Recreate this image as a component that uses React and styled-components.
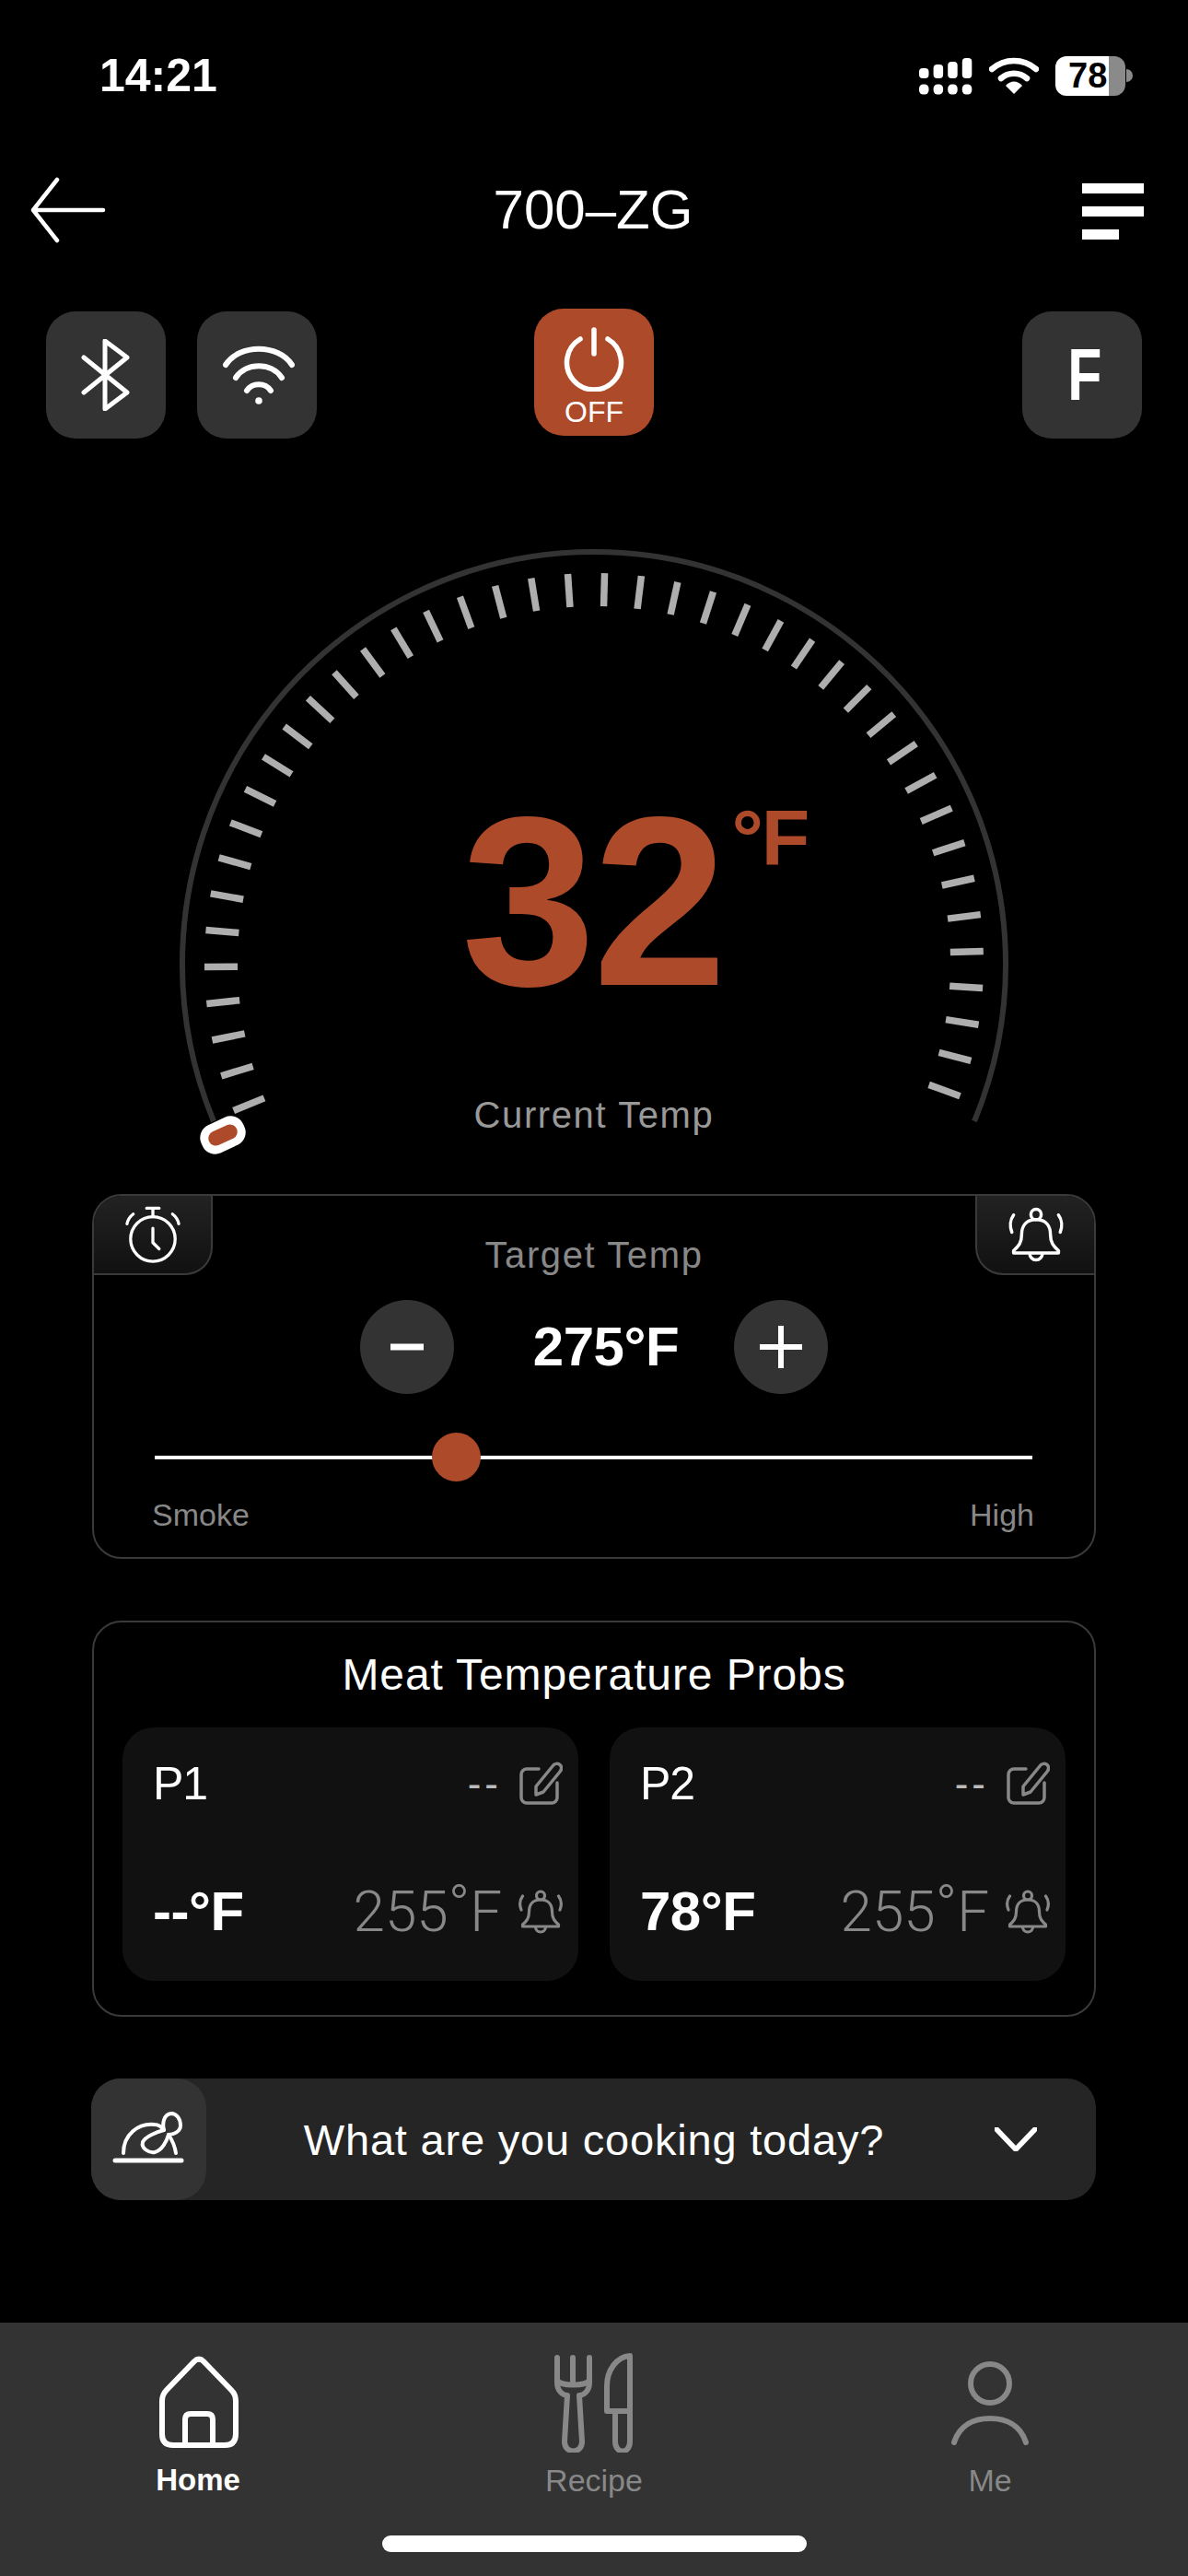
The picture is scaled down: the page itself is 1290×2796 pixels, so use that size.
import React from "react";
import styled, { createGlobalStyle } from "styled-components";

const ORANGE = "#ad4a29";
const FONT = `"Liberation Sans", Arial, sans-serif`;

const GlobalStyle = createGlobalStyle`
  html, body { margin: 0; padding: 0; background: #000; }
  * { box-sizing: border-box; }
`;

const Page = styled.div`
  width: 1290px;
  height: 2796px;
  background: #000;
  color: #fff;
  font-family: ${FONT};
  display: flex;
  flex-direction: column;
  overflow: hidden;
`;

/* STATUS BAR */

const StatusBar = styled.div`
  height: 164px;
  flex: none;
  display: flex;
  align-items: center;
  justify-content: space-between;
  padding: 0 60px 0 108px;
`;

const Clock = styled.div`
  font-size: 50px;
  font-weight: 700;
  line-height: 1;
`;

const StatusIcons = styled.div`
  display: flex;
  align-items: center;
  gap: 18px;
`;

const Battery = styled.div`
  position: relative;
  width: 76px;
  height: 43px;
  border-radius: 12px;
  overflow: hidden;
  background: linear-gradient(to right, #fff 76%, #8a8a8a 76%);
  color: #000;
  font-size: 38px;
  font-weight: 700;
  line-height: 43px;
  padding-left: 14px;
`;

const BatteryNub = styled.div`
  width: 7px;
  height: 14px;
  margin-left: -17px;
  border-radius: 0 7px 7px 0;
  background: #8a8a8a;
`;

/* HEADER */

const Header = styled.div`
  height: 128px;
  flex: none;
  display: flex;
  align-items: center;
  justify-content: space-between;
  padding: 0 48px 0 31px;
`;

const Title = styled.div`
  font-size: 60px;
  line-height: 1;
  padding-right: 2px;
`;

const MenuBars = styled.div`
  width: 67px;
  display: flex;
  flex-direction: column;
  gap: 14px;
  padding-top: 2px;
`;

const MenuBar = styled.div`
  height: 11px;
  background: #fff;
  width: ${({ $short }) => ($short ? "40px" : "67px")};
`;

/* CONTROLS */

const Controls = styled.div`
  margin-top: 43px;
  padding: 0 50px;
  display: grid;
  grid-template-columns: 1fr auto 1fr;
  align-items: start;
  flex: none;
`;

const ControlGroup = styled.div`
  display: flex;
  gap: 34px;
  justify-content: ${({ $end }) => ($end ? "flex-end" : "flex-start")};
`;

const SquareButton = styled.div`
  width: 130px;
  height: 138px;
  margin-top: 3px;
  background: #333;
  border-radius: 32px;
  display: flex;
  align-items: center;
  justify-content: center;
`;

const PowerButton = styled.div`
  width: 130px;
  height: 138px;
  background: ${ORANGE};
  border-radius: 32px;
  display: flex;
  flex-direction: column;
  align-items: center;
  padding-top: 20px;
`;

const PowerLabel = styled.div`
  font-size: 32px;
  line-height: 32px;
  margin-top: 6px;
  letter-spacing: 0;
`;

const UnitLetter = styled.div`
  font-size: 80px;
  font-weight: 700;
  line-height: 1;
  padding-left: 6px;
  transform: scaleX(0.76);
`;

/* GAUGE */

const GaugeWrap = styled.div`
  position: relative;
  height: 820px;
  flex: none;
`;

const GaugeSvg = styled.svg`
  display: block;
`;

const Reading = styled.div`
  position: absolute;
  top: 372px;
  left: 501px;
  display: flex;
  align-items: flex-start;
  color: ${ORANGE};
  font-weight: 700;
`;

const ReadingValue = styled.div`
  font-size: 262px;
  line-height: 262px;
  letter-spacing: -3px;
`;

const ReadingUnit = styled.div`
  font-size: 86px;
  line-height: 86px;
  margin: 18px 0 0 8px;
  letter-spacing: -2px;
`;

const GaugeLabel = styled.div`
  position: absolute;
  left: 0;
  right: 0;
  top: 712px;
  text-align: center;
  font-size: 40px;
  line-height: 44px;
  color: #999;
  letter-spacing: 1.6px;
`;

/* CARDS */

const Card = styled.div`
  flex: none;
  margin: ${({ $top }) => $top}px 100px 0;
  height: ${({ $height }) => $height}px;
  border: 2px solid #3a3a3a;
  border-radius: 32px;
  position: relative;
`;

const CornerTab = styled.div`
  position: absolute;
  top: 0;
  ${({ $right }) => ($right ? "right: 0;" : "left: 0;")}
  width: 129px;
  height: 86px;
  background: linear-gradient(to bottom, #222, #111);
  border-bottom: 2px solid #3a3a3a;
  ${({ $right }) =>
    $right
      ? "border-left: 2px solid #3a3a3a; border-radius: 0 30px 0 30px;"
      : "border-right: 2px solid #3a3a3a; border-radius: 30px 0 30px 0;"}
  display: flex;
  align-items: center;
  justify-content: center;
`;

const TargetLabel = styled.div`
  padding-top: 42px;
  text-align: center;
  font-size: 40px;
  line-height: 44px;
  color: #888;
  letter-spacing: 1.6px;
`;

const Stepper = styled.div`
  margin-top: 27px;
  display: flex;
  justify-content: center;
  align-items: center;
`;

const RoundButton = styled.div`
  width: 102px;
  height: 102px;
  border-radius: 50%;
  background: #333;
  display: flex;
  align-items: center;
  justify-content: center;
`;

const StepValue = styled.div`
  width: 304px;
  text-align: center;
  padding-left: 26px;
  font-size: 60px;
  font-weight: 700;
  line-height: 1;
  letter-spacing: -0.5px;
`;

const SliderTrack = styled.div`
  position: relative;
  margin: 67px 67px 0 66px;
  height: 4px;
  background: #fff;
`;

const SliderThumb = styled.div`
  position: absolute;
  top: -25px;
  width: 53px;
  height: 53px;
  border-radius: 50%;
  background: ${ORANGE};
`;

const SliderLabels = styled.div`
  display: flex;
  justify-content: space-between;
  margin-top: 40px;
  padding: 0 65px 0 63px;
  font-size: 34px;
  line-height: 40px;
  color: #888;
`;

const ProbesTitle = styled.div`
  padding-top: 30px;
  text-align: center;
  font-size: 48px;
  line-height: 54px;
  letter-spacing: 0.9px;
`;

const ProbeGrid = styled.div`
  margin: 30px 31px 0;
  display: grid;
  grid-template-columns: 1fr 1fr;
  gap: 34px;
`;

const ProbeCard = styled.div`
  height: 275px;
  background: #111;
  border-radius: 34px;
  padding: 36px 17px 44px 33px;
  display: flex;
  flex-direction: column;
  justify-content: space-between;
`;

const ProbeRow = styled.div`
  display: flex;
  align-items: center;
  justify-content: space-between;
`;

const ProbeSide = styled.div`
  display: flex;
  align-items: center;
  gap: 18px;
`;

const ProbeName = styled.div`
  font-size: 50px;
  line-height: 1;
  letter-spacing: -1px;
`;

const ProbeDash = styled.div`
  font-size: 44px;
  line-height: 1;
  color: #bbb;
  letter-spacing: 4px;
`;

const ProbeTemp = styled.div`
  font-size: 60px;
  font-weight: 700;
  line-height: 1;
  letter-spacing: -0.5px;
`;

const ProbeTarget = styled.div`
  font-family: Roboto, ${FONT};
  font-weight: 300;
  font-size: 62px;
  line-height: 1;
  color: #888;
`;

const ProbeDegree = styled.span`
  position: relative;
  top: -7px;
`;

const CookSelect = styled.div`
  flex: none;
  margin: 67px 100px 0 99px;
  height: 132px;
  border-radius: 32px;
  background: #252525;
  display: flex;
  align-items: center;
`;

const CookIcon = styled.div`
  width: 125px;
  height: 132px;
  border-radius: 32px;
  background: #333;
  display: flex;
  align-items: center;
  justify-content: center;
`;

const CookText = styled.div`
  flex: 1;
  padding-right: 14px;
  text-align: center;
  font-size: 47px;
  letter-spacing: 0.8px;
`;

const Chevron = styled.svg`
  margin-right: 64px;
  flex: none;
`;

/* TAB BAR */

const TabBar = styled.div`
  margin-top: auto;
  height: 275px;
  flex: none;
  background: #333;
  display: flex;
  flex-direction: column;
  align-items: center;
`;

const Tabs = styled.div`
  width: 100%;
  padding-top: 33px;
  display: grid;
  grid-template-columns: repeat(3, 1fr);
`;

const Tab = styled.div`
  display: flex;
  flex-direction: column;
  align-items: center;
  color: ${({ $active }) => ($active ? "#fff" : "#888")};
`;

const TabIcon = styled.svg`
  display: block;
`;

const TabLabel = styled.div`
  margin-top: 10px;
  font-size: ${({ $active }) => ($active ? "33px" : "34px")};
  font-weight: ${({ $active }) => ($active ? 700 : 400)};
  line-height: 40px;
`;

const HomeIndicator = styled.div`
  margin-top: 40px;
  width: 461px;
  height: 18px;
  border-radius: 9px;
  background: #fff;
`;

/* ICONS */

const line = { fill: "none", stroke: "currentColor", strokeLinecap: "round", strokeLinejoin: "round" };

const SignalIcon = () => (
  <svg width="58" height="42" viewBox="0 0 58 42" fill="#fff">
    {[11, 15, 18, 22].map((h, i) => (
      <g key={i}>
        <rect x={i * 15.6} y={24 - h} width="10.5" height={h} rx="4" />
        <rect x={i * 15.6} y="30.5" width="10.5" height="11" rx="4.5" />
      </g>
    ))}
  </svg>
);

const StatusWifi = () => (
  <svg width="54" height="40" viewBox="0 0 54 40">
    <path d="M3 13 C17 1 37 1 51 13" fill="none" stroke="#fff" strokeWidth="6.5" strokeLinecap="round" />
    <path d="M13 23 C21 16 33 16 41 23" fill="none" stroke="#fff" strokeWidth="6.5" strokeLinecap="round" />
    <path d="M18 31 C23 25 31 25 36 31 L27 40 Z" fill="#fff" />
  </svg>
);

const BackArrow = () => (
  <svg width="84" height="72" viewBox="0 0 84 72" style={{ color: "#fff" }}>
    <path d="M31 3 L5 36 L31 69 M5 36 H81" {...line} strokeWidth="4.5" />
  </svg>
);

const BluetoothIcon = () => (
  <svg width="54" height="78" viewBox="0 0 54 78">
    <path d="M3 20 L50 58 L26 76 V2 L50 20 L3 58" {...line} strokeWidth="5" stroke="#fff" />
  </svg>
);

const WifiIcon = () => (
  <svg width="78" height="66" viewBox="0 0 78 66" style={{ marginLeft: 4 }}>
    <g {...line} stroke="#fff" strokeWidth="6">
      <path d="M3 22 C18 -1 60 -1 75 22" />
      <path d="M14 36 C25 19 53 19 64 36" />
      <path d="M26 50 C32 41 46 41 52 50" />
    </g>
    <circle cx="39" cy="61" r="3.8" fill="#fff" />
  </svg>
);

const PowerIcon = () => (
  <svg width="68" height="70" viewBox="0 0 68 70">
    <g {...line} stroke="#fff" strokeWidth="5.5">
      <path d="M19 13 A29.5 29.5 0 1 0 49 13" />
      <path d="M34 3 V29" />
    </g>
  </svg>
);

const AlarmIcon = () => (
  <svg width="62" height="62" viewBox="0 0 64 64" style={{ color: "#fff" }}>
    <g {...line} strokeWidth="3.4">
      <circle cx="32" cy="37" r="25" />
      <path d="M32 12 V3 M25 2.5 H39" />
      <path d="M32 25 V41 L39 48" />
      <path d="M3 20 C4 15 6 12 10 9" />
      <path d="M61 20 C60 15 58 12 54 9" />
    </g>
  </svg>
);

const BellIcon = ({ size, color, width }) => (
  <svg width={size} height={size} viewBox="0 0 48 48" style={{ color }}>
    <g {...line} strokeWidth={width}>
      <circle cx="24" cy="6.5" r="4.5" />
      <path d="M24 11 C15 11 11.5 17 11.5 24 C11.5 31 9 34 4.5 38 V40 H43.5 V38 C39 34 36.5 31 36.5 24 C36.5 17 33 11 24 11 Z" />
      <path d="M18.5 40.5 A5.5 5.5 0 0 0 29.5 40.5" />
      <path d="M4.5 7 C1.5 11 1 17 3 22" />
      <path d="M43.5 7 C46.5 11 47 17 45 22" />
    </g>
  </svg>
);

const EditIcon = () => (
  <svg width="48" height="48" viewBox="0 0 48 48" style={{ color: "#888" }}>
    <g {...line} strokeWidth="3.5">
      <path d="M22 8 H9 A6 6 0 0 0 3 14 V39 A6 6 0 0 0 9 45 H36 A6 6 0 0 0 42 39 V23" />
      <path d="M19 27 L37 5 C39 2 43 1.5 45 3.5 C47 5.5 47 8.5 45 11 L27 33 L19 36 Z" />
    </g>
  </svg>
);

const TurkeyIcon = () => (
  <svg width="80" height="60" viewBox="122 2293 80 60" style={{ color: "#fff" }}>
    <g {...line} strokeWidth="4">
      <path d="M134 2338 C134 2318 150 2305 168 2307 C172 2307 175 2309 178 2313" />
      <path d="M183 2318 C187 2324 190 2331 191 2338" />
      <path d="M178 2313 C170 2315 158 2320 155 2326 C153 2333 162 2338 168 2337 C176 2335 181 2325 183 2318 C188 2318 196 2315 196 2308 C196 2301 192 2295 186 2295 C178 2296 176 2305 178 2313" />
      <path d="M125 2346 H197" strokeWidth="5" />
    </g>
  </svg>
);

/* GAUGE DRAWING */

const TICK_COUNT = 42;
const GAUGE_X = 645;
const GAUGE_Y = 1045;

const ticks = Array.from({ length: TICK_COUNT }, (_, i) => {
  const a = ((-22.3 + (222.3 / (TICK_COUNT - 1)) * i) * Math.PI) / 180;
  const dx = -Math.cos(a);
  const dy = -Math.sin(a);
  return {
    x1: GAUGE_X + dx * 387,
    y1: GAUGE_Y + dy * 387,
    x2: GAUGE_X + dx * 423,
    y2: GAUGE_Y + dy * 423,
  };
});

const Gauge = () => (
  <GaugeSvg width="1290" height="820" viewBox="0 476 1290 820">
    <path d="M232 1217 A447 447 0 1 1 1058 1217" fill="none" stroke="#333" strokeWidth="6" />
    {ticks.map((t, i) => (
      <line key={i} {...t} stroke="#aeaeae" strokeWidth="7.5" />
    ))}
    <g transform="rotate(-25 242 1232)">
      <rect x="217" y="1215.5" width="50" height="33" rx="15" fill="#fff" />
      <rect x="225.5" y="1224" width="33" height="16" rx="8" fill={ORANGE} />
    </g>
  </GaugeSvg>
);

const Probe = ({ name, temp }) => (
  <ProbeCard>
    <ProbeRow>
      <ProbeName>{name}</ProbeName>
      <ProbeSide>
        <ProbeDash>--</ProbeDash>
        <EditIcon />
      </ProbeSide>
    </ProbeRow>
    <ProbeRow>
      <ProbeTemp>{temp}</ProbeTemp>
      <ProbeSide>
        <ProbeTarget>
          255<ProbeDegree>°</ProbeDegree>F
        </ProbeTarget>
        <BellIcon size={48} color="#888" width={3.2} />
      </ProbeSide>
    </ProbeRow>
  </ProbeCard>
);

export default function App() {
  return (
    <Page>
      <GlobalStyle />
      <StatusBar>
        <Clock>14:21</Clock>
        <StatusIcons>
          <SignalIcon />
          <StatusWifi />
          <Battery>78</Battery>
          <BatteryNub />
        </StatusIcons>
      </StatusBar>

      <Header>
        <BackArrow />
        <Title>700–ZG</Title>
        <MenuBars>
          <MenuBar />
          <MenuBar />
          <MenuBar $short />
        </MenuBars>
      </Header>

      <Controls>
        <ControlGroup>
          <SquareButton>
            <BluetoothIcon />
          </SquareButton>
          <SquareButton>
            <WifiIcon />
          </SquareButton>
        </ControlGroup>
        <PowerButton>
          <PowerIcon />
          <PowerLabel>OFF</PowerLabel>
        </PowerButton>
        <ControlGroup $end>
          <SquareButton>
            <UnitLetter>F</UnitLetter>
          </SquareButton>
        </ControlGroup>
      </Controls>

      <GaugeWrap>
        <Gauge />
        <Reading>
          <ReadingValue>32</ReadingValue>
          <ReadingUnit>°F</ReadingUnit>
        </Reading>
        <GaugeLabel>Current Temp</GaugeLabel>
      </GaugeWrap>

      <Card $top={0} $height={396}>
        <CornerTab>
          <AlarmIcon />
        </CornerTab>
        <CornerTab $right>
          <BellIcon size={60} color="#fff" width={2.8} />
        </CornerTab>
        <TargetLabel>Target Temp</TargetLabel>
        <Stepper>
          <RoundButton>
            <svg width="36" height="8" viewBox="0 0 36 8">
              <rect width="36" height="7" y="0.5" fill="#fff" />
            </svg>
          </RoundButton>
          <StepValue>275°F</StepValue>
          <RoundButton>
            <svg width="46" height="46" viewBox="0 0 46 46">
              <path d="M0 23 H46 M23 0 V46" stroke="#fff" strokeWidth="6" />
            </svg>
          </RoundButton>
        </Stepper>
        <SliderTrack>
          <SliderThumb style={{ left: `${(301 / 953) * 100}%` }} />
        </SliderTrack>
        <SliderLabels>
          <span>Smoke</span>
          <span>High</span>
        </SliderLabels>
      </Card>

      <Card $top={67} $height={430}>
        <ProbesTitle>Meat Temperature Probs</ProbesTitle>
        <ProbeGrid>
          <Probe name="P1" temp="--°F" />
          <Probe name="P2" temp="78°F" />
        </ProbeGrid>
      </Card>

      <CookSelect>
        <CookIcon>
          <TurkeyIcon />
        </CookIcon>
        <CookText>What are you cooking today?</CookText>
        <Chevron width="46" height="26" viewBox="0 0 46 26" style={{ color: "#fff" }}>
          <path d="M2 2 L23 24 L44 2" {...line} strokeWidth="5.5" />
        </Chevron>
      </CookSelect>

      <TabBar>
        <Tabs>
          <Tab $active>
            <TabIcon width="88" height="108" viewBox="170 2554 88 108">
              <g {...line} strokeWidth="6">
                <path d="M210 2563 L180 2594 Q175 2599 175 2606 V2642 Q175 2654 187 2654 H243 Q255 2654 255 2642 V2606 Q255 2599 250 2594 L220 2563 Q215 2558 210 2563 Z" />
                <path d="M200 2654 V2626 Q200 2620 206 2620 H224 Q230 2620 230 2626 V2654" />
              </g>
            </TabIcon>
            <TabLabel $active>Home</TabLabel>
          </Tab>
          <Tab>
            <TabIcon width="90" height="108" viewBox="600 2554 90 108">
              <g {...line} strokeWidth="6">
                <path d="M605 2559 V2586 C605 2596 612 2600 616 2600 L613 2650 C613 2664 632 2664 632 2650 L629 2600 C633 2600 640 2596 640 2586 V2559" />
                <path d="M622 2559 V2584 M605 2584 C610 2590 635 2590 640 2584" />
                <path d="M684 2557 C670 2558 659 2572 659 2590 V2617 H684 V2557 Z" />
                <path d="M668 2617 V2650 C668 2664 684 2664 684 2650 V2617" />
              </g>
            </TabIcon>
            <TabLabel>Recipe</TabLabel>
          </Tab>
          <Tab>
            <TabIcon width="90" height="108" viewBox="1030 2554 90 108">
              <g {...line} strokeWidth="6">
                <circle cx="1075" cy="2587" r="21" />
                <path d="M1036 2651 C1042 2632 1058 2625 1075 2625 C1092 2625 1108 2632 1114 2651" />
              </g>
            </TabIcon>
            <TabLabel>Me</TabLabel>
          </Tab>
        </Tabs>
        <HomeIndicator />
      </TabBar>
    </Page>
  );
}
